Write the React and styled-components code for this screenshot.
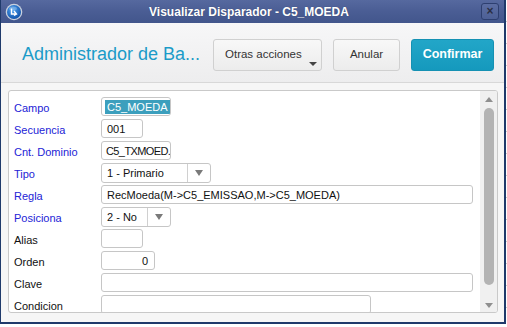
import React from "react";
import styled, { createGlobalStyle } from "styled-components";

const Global = createGlobalStyle`
  html, body { margin: 0; padding: 0; }
  body {
    width: 507px; height: 327px; overflow: hidden;
    background: #ffffff repeating-linear-gradient(180deg, transparent 0 21px, #c9c9c9 21px 22px);
    font-family: "Liberation Sans", Arial, sans-serif;
  }
`;

const Window = styled.div`
  width: 503px;
  height: 322px;
  border-left: 1px solid #1f3a6b;
  border-right: 2px solid #1f3a6b;
  border-bottom: 2px solid #1f3a6b;
  background: #f6f6f6;
  display: flex;
  flex-direction: column;
  overflow: hidden;
`;

const TitleBar = styled.div`
  height: 23px;
  flex: none;
  display: flex;
  align-items: center;
  padding: 0 5px 0 4px;
  background: linear-gradient(180deg, #56699f 0%, #4a5d94 50%, #42568c 100%);
  color: #fff;
  font-weight: bold;
  font-size: 12px;
`;

const TitleText = styled.div`
  flex: 1;
  text-align: center;
  padding-right: 6px;
  text-shadow: 0 0 1px rgba(0,0,0,0.3);
`;

const CloseBtn = styled.div`
  width: 16px;
  height: 15px;
  border: 1px solid #2d3f70;
  border-radius: 3px;
  background: linear-gradient(180deg, #5b6da2, #4d6096);
  color: #2a2f45;
  font-size: 12px;
  line-height: 14px;
  text-align: center;
  font-weight: bold;
`;

const Header = styled.div`
  height: 59px;
  flex: none;
  display: flex;
  align-items: center;
  padding: 0 10px 0 21px;
  background: linear-gradient(180deg, #f7f7f8 0%, #ededee 100%);
  border-bottom: 1px solid #d8d8d8;
`;

const HeaderTitle = styled.div`
  flex: 1;
  color: #1b9bc8;
  font-size: 18px;
  white-space: nowrap;
  padding-top: 3px;
`;

const Button = styled.div`
  position: relative;
  flex: none;
  height: 32px;
  width: ${p => p.$w}px;
  margin-left: 11px;
  box-sizing: border-box;
  border: 1px solid ${p => (p.$primary ? "#1591b3" : "#d0d0d0")};
  border-radius: 3px;
  background: ${p => (p.$primary ? "linear-gradient(180deg,#22a6c8,#1599bd)" : "linear-gradient(180deg,#f8f8f8,#ececec)")};
  color: ${p => (p.$primary ? "#fff" : "#333")};
  font-size: ${p => (p.$primary ? "12.5px" : "11.5px")};
  font-weight: ${p => (p.$primary ? "bold" : "normal")};
  display: flex;
  align-items: center;
  justify-content: ${p => (p.$left ? "flex-start" : "center")};
  padding-left: ${p => (p.$left ? "11px" : "0")};
  padding-bottom: 3px;
  margin-top: 5px;
`;

const Caret = styled.span`
  position: absolute;
  right: 4px;
  bottom: 4px;
  width: 0; height: 0;
  border-left: 4px solid transparent;
  border-right: 4px solid transparent;
  border-top: 4px solid #444;
`;

const Body = styled.div`
  flex: 1;
  padding: 7px 6px 9px 7px;
  display: flex;
  min-height: 0;
`;

const Panel = styled.div`
  flex: 1;
  border: 1px solid #c9c9c9;
  border-radius: 3px;
  background: #fff;
  display: flex;
  overflow: hidden;
`;

const Form = styled.div`
  flex: 1;
  padding: 6px 0 0 5px;
  display: flex;
  flex-direction: column;
  gap: 3px;
  overflow: hidden;
`;

const Row = styled.div`
  display: flex;
  align-items: center;
  height: 19px;
  flex: none;
`;

const Label = styled.div`
  width: 87px;
  flex: none;
  font-size: 11px;
  color: ${p => (p.$blue ? "#2323d6" : "#111")};
  padding-top: 2px;
`;

const Input = styled.div`
  width: ${p => p.$w}px;
  height: 19px;
  box-sizing: border-box;
  border: 1px solid #c6c6c6;
  border-radius: 3px;
  background: #fff;
  font-size: 11px;
  color: #111;
  display: flex;
  align-items: center;
  justify-content: ${p => (p.$right ? "flex-end" : "flex-start")};
  padding: 0 ${p => (p.$right ? "6px" : "0")} 0 ${p => (p.$sel ? "3px" : p.$tight ? "4px" : "5px")};
  overflow: hidden;
  white-space: nowrap;
  letter-spacing: ${p => (p.$tight ? "-0.6px" : "0")};
`;

const Selected = styled.span`
  background: #3c9fbd;
  color: #fff;
  padding: 1px 4px 1px 2px;
`;

const Select = styled.div`
  width: ${p => p.$w}px;
  height: 20px;
  box-sizing: border-box;
  border: 1px solid #c6c6c6;
  border-radius: 3px;
  background: #fff;
  font-size: 11px;
  color: #111;
  display: flex;
  align-items: stretch;
`;

const SelectValue = styled.div`
  flex: 1;
  display: flex;
  align-items: center;
  padding-left: 5px;
  border-right: 1px solid #d0d0d0;
`;

const SelectArrow = styled.div`
  width: 22px;
  display: flex;
  align-items: center;
  justify-content: center;
  &::after {
    content: "";
    border-left: 4px solid transparent;
    border-right: 4px solid transparent;
    border-top: 6px solid #7a7a7a;
  }
`;

const ScrollTrack = styled.div`
  width: 17px;
  flex: none;
  background: #f0f0f0;
  display: flex;
  flex-direction: column;
  align-items: center;
  padding: 6px 0 4px;
  box-sizing: border-box;
`;

const Arrow = styled.div`
  width: 0; height: 0;
  border-left: 4px solid transparent;
  border-right: 4px solid transparent;
  ${p => (p.$up ? "border-bottom: 5px solid #8f8f8f;" : "border-top: 5px solid #8f8f8f;")}
`;

const Thumb = styled.div`
  width: 10px;
  height: 177px;
  margin: 6px 0 auto;
  border-radius: 5px;
  background: #b3b3b3;
`;

const AppIcon = () => (
  <svg width="18" height="18" viewBox="0 0 18 18">
    <defs>
      <radialGradient id="g" cx="40%" cy="35%" r="70%">
        <stop offset="0" stopColor="#4fa3f0" />
        <stop offset="1" stopColor="#0d4fa8" />
      </radialGradient>
    </defs>
    <circle cx="9" cy="9" r="8.3" fill="#c9d1de" />
    <circle cx="9" cy="9" r="7" fill="url(#g)" />
    <path d="M6.5 5.5 v5.5 h5 M9 8 l2.5 3 -2.5 1.5" stroke="#fff" strokeWidth="1.4" fill="none" />
    <ellipse cx="8" cy="5.5" rx="4" ry="2" fill="#fff" opacity="0.25" />
  </svg>
);

const rows = [
  { label: "Campo", blue: true, type: "input", w: 70, sel: true, value: "C5_MOEDA" },
  { label: "Secuencia", blue: true, type: "input", w: 42, value: "001" },
  { label: "Cnt. Dominio", blue: true, type: "input", w: 70, value: "C5_TXMOED.", tight: true },
  { label: "Tipo", blue: true, type: "select", w: 110, value: "1 - Primario" },
  { label: "Regla", blue: true, type: "input", w: 372, value: "RecMoeda(M->C5_EMISSAO,M->C5_MOEDA)" },
  { label: "Posiciona", blue: true, type: "select", w: 70, value: "2 - No" },
  { label: "Alias", type: "input", w: 42, value: "" },
  { label: "Orden", type: "input", w: 54, value: "0", right: true },
  { label: "Clave", type: "input", w: 372, value: "" },
  { label: "Condicion", type: "input", w: 270, value: "" },
];

export default function App() {
  return (
    <>
      <Global />
      <Window>
        <TitleBar>
          <AppIcon />
          <TitleText>Visualizar Disparador - C5_MOEDA</TitleText>
          <CloseBtn>×</CloseBtn>
        </TitleBar>
        <Header>
          <HeaderTitle>Administrador de Ba...</HeaderTitle>
          <Button $w={109} $left>
            Otras acciones
            <Caret />
          </Button>
          <Button $w={67}>Anular</Button>
          <Button $w={83} $primary>Confirmar</Button>
        </Header>
        <Body>
          <Panel>
            <Form>
              {rows.map(r => (
                <Row key={r.label}>
                  <Label $blue={r.blue}>{r.label}</Label>
                  {r.type === "select" ? (
                    <Select $w={r.w}>
                      <SelectValue>{r.value}</SelectValue>
                      <SelectArrow />
                    </Select>
                  ) : (
                    <Input $w={r.w} $right={r.right} $sel={r.sel} $tight={r.tight}>
                      {r.sel ? <Selected>{r.value}</Selected> : r.value}
                    </Input>
                  )}
                </Row>
              ))}
            </Form>
            <ScrollTrack>
              <Arrow $up />
              <Thumb />
              <Arrow />
            </ScrollTrack>
          </Panel>
        </Body>
      </Window>
    </>
  );
}
